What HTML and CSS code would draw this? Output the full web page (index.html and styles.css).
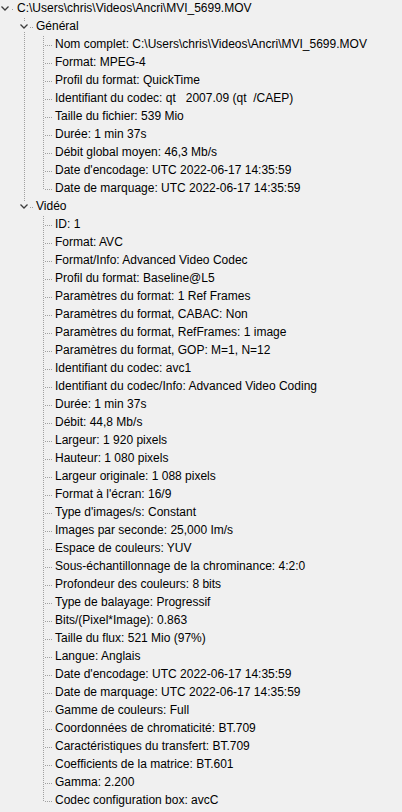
FILE: index.html
```html
<!DOCTYPE html>
<html lang="fr">
<head>
<meta charset="utf-8">
<title>MediaInfo</title>
<link rel="stylesheet" href="styles.css">
</head>
<body>
<div class="tree">
  <div class="node root">
    <div class="row"><span class="exp"><svg width="11" height="18" viewBox="0 0 11 18"><rect class="mask" x="0" y="4" width="11" height="10" /><polyline points="1.5,6.5 5,10 8.5,6.5" /></svg></span><span class="label">C:\Users\chris\Videos\Ancri\MVI_5699.MOV</span></div>
    <div class="children">
      <div class="node">
        <div class="row"><span class="exp"><svg width="11" height="18" viewBox="0 0 11 18"><rect class="mask" x="0" y="4" width="11" height="10" /><polyline points="1.5,6.5 5,10 8.5,6.5" /></svg></span><span class="label">Général</span></div>
        <div class="children">
          <div class="node leaf"><div class="row"><span class="label">Nom complet: C:\Users\chris\Videos\Ancri\MVI_5699.MOV</span></div></div>
          <div class="node leaf"><div class="row"><span class="label">Format: MPEG-4</span></div></div>
          <div class="node leaf"><div class="row"><span class="label">Profil du format: QuickTime</span></div></div>
          <div class="node leaf"><div class="row"><span class="label">Identifiant du codec: qt   2007.09 (qt  /CAEP)</span></div></div>
          <div class="node leaf"><div class="row"><span class="label">Taille du fichier: 539 Mio</span></div></div>
          <div class="node leaf"><div class="row"><span class="label">Durée: 1 min 37s</span></div></div>
          <div class="node leaf"><div class="row"><span class="label">Débit global moyen: 46,3 Mb/s</span></div></div>
          <div class="node leaf"><div class="row"><span class="label">Date d'encodage: UTC 2022-06-17 14:35:59</span></div></div>
          <div class="node leaf"><div class="row"><span class="label">Date de marquage: UTC 2022-06-17 14:35:59</span></div></div>
        </div>
      </div>
      <div class="node">
        <div class="row"><span class="exp"><svg width="11" height="18" viewBox="0 0 11 18"><rect class="mask" x="0" y="4" width="11" height="10" /><polyline points="1.5,6.5 5,10 8.5,6.5" /></svg></span><span class="label">Vidéo</span></div>
        <div class="children">
          <div class="node leaf"><div class="row"><span class="label">ID: 1</span></div></div>
          <div class="node leaf"><div class="row"><span class="label">Format: AVC</span></div></div>
          <div class="node leaf"><div class="row"><span class="label">Format/Info: Advanced Video Codec</span></div></div>
          <div class="node leaf"><div class="row"><span class="label">Profil du format: Baseline@L5</span></div></div>
          <div class="node leaf"><div class="row"><span class="label">Paramètres du format: 1 Ref Frames</span></div></div>
          <div class="node leaf"><div class="row"><span class="label">Paramètres du format, CABAC: Non</span></div></div>
          <div class="node leaf"><div class="row"><span class="label">Paramètres du format, RefFrames: 1 image</span></div></div>
          <div class="node leaf"><div class="row"><span class="label">Paramètres du format, GOP: M=1, N=12</span></div></div>
          <div class="node leaf"><div class="row"><span class="label">Identifiant du codec: avc1</span></div></div>
          <div class="node leaf"><div class="row"><span class="label">Identifiant du codec/Info: Advanced Video Coding</span></div></div>
          <div class="node leaf"><div class="row"><span class="label">Durée: 1 min 37s</span></div></div>
          <div class="node leaf"><div class="row"><span class="label">Débit: 44,8 Mb/s</span></div></div>
          <div class="node leaf"><div class="row"><span class="label">Largeur: 1 920 pixels</span></div></div>
          <div class="node leaf"><div class="row"><span class="label">Hauteur: 1 080 pixels</span></div></div>
          <div class="node leaf"><div class="row"><span class="label">Largeur originale: 1 088 pixels</span></div></div>
          <div class="node leaf"><div class="row"><span class="label">Format à l'écran: 16/9</span></div></div>
          <div class="node leaf"><div class="row"><span class="label">Type d'images/s: Constant</span></div></div>
          <div class="node leaf"><div class="row"><span class="label">Images par seconde: 25,000 Im/s</span></div></div>
          <div class="node leaf"><div class="row"><span class="label">Espace de couleurs: YUV</span></div></div>
          <div class="node leaf"><div class="row"><span class="label">Sous-échantillonnage de la chrominance: 4:2:0</span></div></div>
          <div class="node leaf"><div class="row"><span class="label">Profondeur des couleurs: 8 bits</span></div></div>
          <div class="node leaf"><div class="row"><span class="label">Type de balayage: Progressif</span></div></div>
          <div class="node leaf"><div class="row"><span class="label">Bits/(Pixel*Image): 0.863</span></div></div>
          <div class="node leaf"><div class="row"><span class="label">Taille du flux: 521 Mio (97%)</span></div></div>
          <div class="node leaf"><div class="row"><span class="label">Langue: Anglais</span></div></div>
          <div class="node leaf"><div class="row"><span class="label">Date d'encodage: UTC 2022-06-17 14:35:59</span></div></div>
          <div class="node leaf"><div class="row"><span class="label">Date de marquage: UTC 2022-06-17 14:35:59</span></div></div>
          <div class="node leaf"><div class="row"><span class="label">Gamme de couleurs: Full</span></div></div>
          <div class="node leaf"><div class="row"><span class="label">Coordonnées de chromaticité: BT.709</span></div></div>
          <div class="node leaf"><div class="row"><span class="label">Caractéristiques du transfert: BT.709</span></div></div>
          <div class="node leaf"><div class="row"><span class="label">Coefficients de la matrice: BT.601</span></div></div>
          <div class="node leaf"><div class="row"><span class="label">Gamma: 2.200</span></div></div>
          <div class="node leaf"><div class="row"><span class="label">Codec configuration box: avcC</span></div></div>
        </div>
      </div>
    </div>
  </div>
</div>
</body>
</html>
```
FILE: styles.css
```css
html, body {
  margin: 0;
  padding: 0;
  background: #f0f0f0;
}
body {
  width: 402px;
  height: 812px;
  overflow: hidden;
  font-family: "Liberation Sans", Arial, sans-serif;
  font-size: 12px;
  color: #000;
}
.node {
  position: relative;
}
.children {
  padding-left: 19px;
}
/* vertical sibling line */
.children > .node::before {
  content: "";
  position: absolute;
  left: 5px;
  top: 0;
  width: 1px;
  height: 100%;
  background: repeating-linear-gradient(to bottom, #a0a0a0 0 1px, transparent 1px 2px);
}
.children > .node:last-child::before {
  height: 9px;
}
.row {
  position: relative;
  height: 18px;
  line-height: 18px;
  white-space: pre;
  display: flex;
  align-items: center;
}
/* horizontal connector */
.children > .node > .row::before {
  content: "";
  position: absolute;
  left: 6px;
  top: 9px;
  width: 9px;
  height: 1px;
  background: repeating-linear-gradient(to right, transparent 0 1px, #a0a0a0 1px 2px);
}
.root > .row::before {
  content: "";
  position: absolute;
  left: 12px;
  top: 9px;
  width: 1px;
  height: 1px;
  background: #a0a0a0;
}
.exp {
  position: relative;
  z-index: 1;
  width: 11px;
  height: 18px;
  margin-right: 6px;
  flex: none;
}
.exp svg {
  display: block;
}
.exp .mask {
  fill: #f0f0f0;
}
.exp polyline {
  fill: none;
  stroke: #3c3c3c;
  stroke-width: 1.3;
}
.leaf > .row .label {
  margin-left: 17px;
}
.label {
  position: relative;
  top: -1px;
}
```
